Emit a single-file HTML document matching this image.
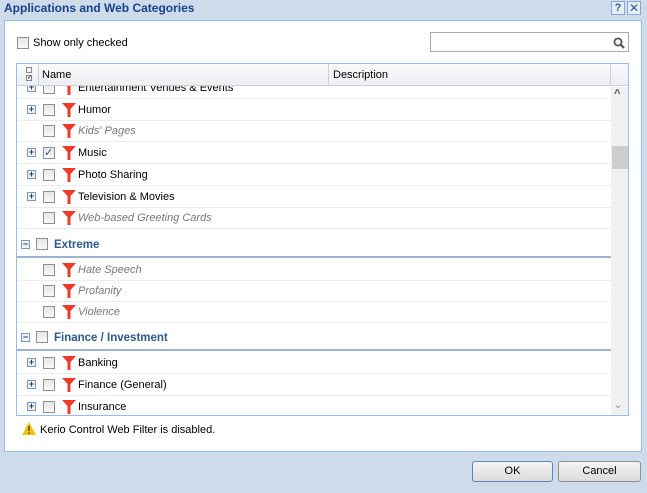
<!DOCTYPE html>
<html><head><style>
*{box-sizing:border-box;margin:0;padding:0}
body{width:647px;height:493px;background:#cddbeb;font-family:"Liberation Sans",sans-serif;font-size:11px;color:#000;position:relative;overflow:hidden}
.abs{position:absolute}
.title{left:4px;top:1px;font-weight:bold;font-size:12px;color:#15428b}
.panel{left:4px;top:20px;width:638px;height:432px;background:#fff;border:1px solid #99bbe8}
.cb{position:absolute;width:12px;height:12px;border:1px solid #8f8f8f;background:linear-gradient(#e6e6e6,#f8f8f8)}
.exp{position:absolute;width:9px;height:9px;border:1px solid #7a98c0;background:#eef3fa;font-size:9px;line-height:7px;text-align:center;color:#1d3e6d;font-weight:bold}
.row{position:absolute;left:17px;width:594px;height:22px;border-bottom:1px solid #ededed}
.row .t{position:absolute;left:61px;top:5px}
.row.d .t{color:#777;font-style:italic}
.fn{position:absolute;left:45px;top:4px}
.grp{position:absolute;left:17px;width:594px;height:26px;border-bottom:2px solid #99b5d1}
.grp .t{position:absolute;left:37px;top:7px;font-weight:bold;color:#2c5a8c;font-size:11.5px}
.btn{position:absolute;top:461px;height:21px;border:1px solid #8d8d8d;border-radius:3px;background:linear-gradient(#f5f5f5,#dcdcdc);text-align:center;line-height:19px}
</style></head><body>
<div class="abs title">Applications and Web Categories</div>
<div class="abs" style="left:611px;top:1px;width:14px;height:14px;border:1px solid #8aa9d0;background:#e4edf8;color:#2b5a96;font-size:11px;text-align:center;line-height:12px;font-weight:bold">?</div>
<div class="abs" style="left:627px;top:1px;width:14px;height:14px;border:1px solid #8aa9d0;background:#e4edf8;color:#2b5a96;font-size:12px;text-align:center;line-height:12px">✕</div>
<div class="abs panel"></div>
<div class="cb" style="left:17px;top:37px"></div>
<div class="abs" style="left:33px;top:37px">Show only checked</div>
<div class="abs" style="left:430px;top:32px;width:199px;height:20px;border:1px solid #a9a9a9;background:#fff"></div>
<svg class="abs" style="left:613px;top:37px" width="13" height="12" viewBox="0 0 13 12"><circle cx="5" cy="5" r="3.6" fill="none" stroke="#555" stroke-width="1.8"/><path d="M7.5 7.5L11 11" stroke="#555" stroke-width="2.2"/></svg>
<div class="abs" style="left:16px;top:63px;width:613px;height:353px;border:1px solid #99bbe8;background:#fff"></div>
<div class="abs" style="left:17px;top:64px;width:611px;height:22px;background:linear-gradient(#fafafa,#eceff3);border-bottom:1px solid #d0d0d0"></div>
<div class="abs" style="left:38px;top:64px;width:1px;height:22px;background:#d0d0d0"></div>
<div class="abs" style="left:328px;top:64px;width:1px;height:22px;background:#d0d0d0"></div>
<div class="abs" style="left:610px;top:64px;width:1px;height:22px;background:#d0d0d0"></div>
<div class="abs" style="left:26px;top:67px;width:6px;height:6px;border:1px solid #888"></div>
<div class="abs" style="left:26px;top:75px;width:6px;height:6px;border:1px solid #888;font-size:6px;line-height:4px">✓</div>
<div class="abs" style="left:42px;top:69px">Name</div>
<div class="abs" style="left:333px;top:69px">Description</div>
<div class="abs" style="left:611px;top:87px;width:17px;height:328px;background:#f0f0f0"></div>
<div class="abs" style="left:612px;top:146px;width:16px;height:23px;background:#cdcdcd"></div>
<div class="abs" style="left:614px;top:88px;color:#555;font-size:11px;font-weight:bold">^</div>
<div class="abs" style="left:614px;top:400px;color:#888;font-size:10px">⌄</div>
<div style="position:absolute;left:0;top:86px;width:611px;height:329px;overflow:hidden">
<div style="position:absolute;left:0;top:-86px;width:647px;height:493px">
<div class="row" style="top:77px"><div class="exp" style="left:10px;top:6px">+</div><div class="cb" style="left:26px;top:5px"></div><svg class="fn" width="14" height="14" viewBox="0 0 14 14"><path d="M0 0H14L8.5 6V14H5.5V6Z" fill="#ee3a2a"/></svg><div class="t">Entertainment Venues &amp; Events</div></div>
<div class="row" style="top:99px"><div class="exp" style="left:10px;top:6px">+</div><div class="cb" style="left:26px;top:5px"></div><svg class="fn" width="14" height="14" viewBox="0 0 14 14"><path d="M0 0H14L8.5 6V14H5.5V6Z" fill="#ee3a2a"/></svg><div class="t">Humor</div></div>
<div class="row d" style="top:120px"><div class="cb" style="left:26px;top:5px"></div><svg class="fn" width="14" height="14" viewBox="0 0 14 14"><path d="M0 0H14L8.5 6V14H5.5V6Z" fill="#ee3a2a"/></svg><div class="t">Kids' Pages</div></div>
<div class="row" style="top:142px"><div class="exp" style="left:10px;top:6px">+</div><div class="cb" style="left:26px;top:5px;font-size:11px;line-height:10px;color:#2d4f8a">✓</div><svg class="fn" width="14" height="14" viewBox="0 0 14 14"><path d="M0 0H14L8.5 6V14H5.5V6Z" fill="#ee3a2a"/></svg><div class="t">Music</div></div>
<div class="row" style="top:164px"><div class="exp" style="left:10px;top:6px">+</div><div class="cb" style="left:26px;top:5px"></div><svg class="fn" width="14" height="14" viewBox="0 0 14 14"><path d="M0 0H14L8.5 6V14H5.5V6Z" fill="#ee3a2a"/></svg><div class="t">Photo Sharing</div></div>
<div class="row" style="top:186px"><div class="exp" style="left:10px;top:6px">+</div><div class="cb" style="left:26px;top:5px"></div><svg class="fn" width="14" height="14" viewBox="0 0 14 14"><path d="M0 0H14L8.5 6V14H5.5V6Z" fill="#ee3a2a"/></svg><div class="t">Television &amp; Movies</div></div>
<div class="row d" style="top:207px"><div class="cb" style="left:26px;top:5px"></div><svg class="fn" width="14" height="14" viewBox="0 0 14 14"><path d="M0 0H14L8.5 6V14H5.5V6Z" fill="#ee3a2a"/></svg><div class="t">Web-based Greeting Cards</div></div>
<div class="grp" style="top:232px"><div class="exp" style="left:4px;top:8px">−</div><div class="cb" style="left:19px;top:6px"></div><div class="t">Extreme</div></div>
<div class="row d" style="top:259px"><div class="cb" style="left:26px;top:5px"></div><svg class="fn" width="14" height="14" viewBox="0 0 14 14"><path d="M0 0H14L8.5 6V14H5.5V6Z" fill="#ee3a2a"/></svg><div class="t">Hate Speech</div></div>
<div class="row d" style="top:280px"><div class="cb" style="left:26px;top:5px"></div><svg class="fn" width="14" height="14" viewBox="0 0 14 14"><path d="M0 0H14L8.5 6V14H5.5V6Z" fill="#ee3a2a"/></svg><div class="t">Profanity</div></div>
<div class="row d" style="top:301px"><div class="cb" style="left:26px;top:5px"></div><svg class="fn" width="14" height="14" viewBox="0 0 14 14"><path d="M0 0H14L8.5 6V14H5.5V6Z" fill="#ee3a2a"/></svg><div class="t">Violence</div></div>
<div class="grp" style="top:325px"><div class="exp" style="left:4px;top:8px">−</div><div class="cb" style="left:19px;top:6px"></div><div class="t">Finance / Investment</div></div>
<div class="row" style="top:352px"><div class="exp" style="left:10px;top:6px">+</div><div class="cb" style="left:26px;top:5px"></div><svg class="fn" width="14" height="14" viewBox="0 0 14 14"><path d="M0 0H14L8.5 6V14H5.5V6Z" fill="#ee3a2a"/></svg><div class="t">Banking</div></div>
<div class="row" style="top:374px"><div class="exp" style="left:10px;top:6px">+</div><div class="cb" style="left:26px;top:5px"></div><svg class="fn" width="14" height="14" viewBox="0 0 14 14"><path d="M0 0H14L8.5 6V14H5.5V6Z" fill="#ee3a2a"/></svg><div class="t">Finance (General)</div></div>
<div class="row" style="top:396px"><div class="exp" style="left:10px;top:6px">+</div><div class="cb" style="left:26px;top:5px"></div><svg class="fn" width="14" height="14" viewBox="0 0 14 14"><path d="M0 0H14L8.5 6V14H5.5V6Z" fill="#ee3a2a"/></svg><div class="t">Insurance</div></div>
</div></div>
<svg class="abs" style="left:22px;top:422px" width="14" height="13" viewBox="0 0 14 13"><path d="M7 0L14 13H0Z" fill="#f5c400"/><path d="M7 4V9M7 10.5V12" stroke="#5a4000" stroke-width="1.5"/></svg>
<div class="abs" style="left:40px;top:424px">Kerio Control Web Filter is disabled.</div>
<div class="btn" style="left:472px;width:81px;border-color:#5b86b8">OK</div>
<div class="btn" style="left:558px;width:83px">Cancel</div>
</body></html>
